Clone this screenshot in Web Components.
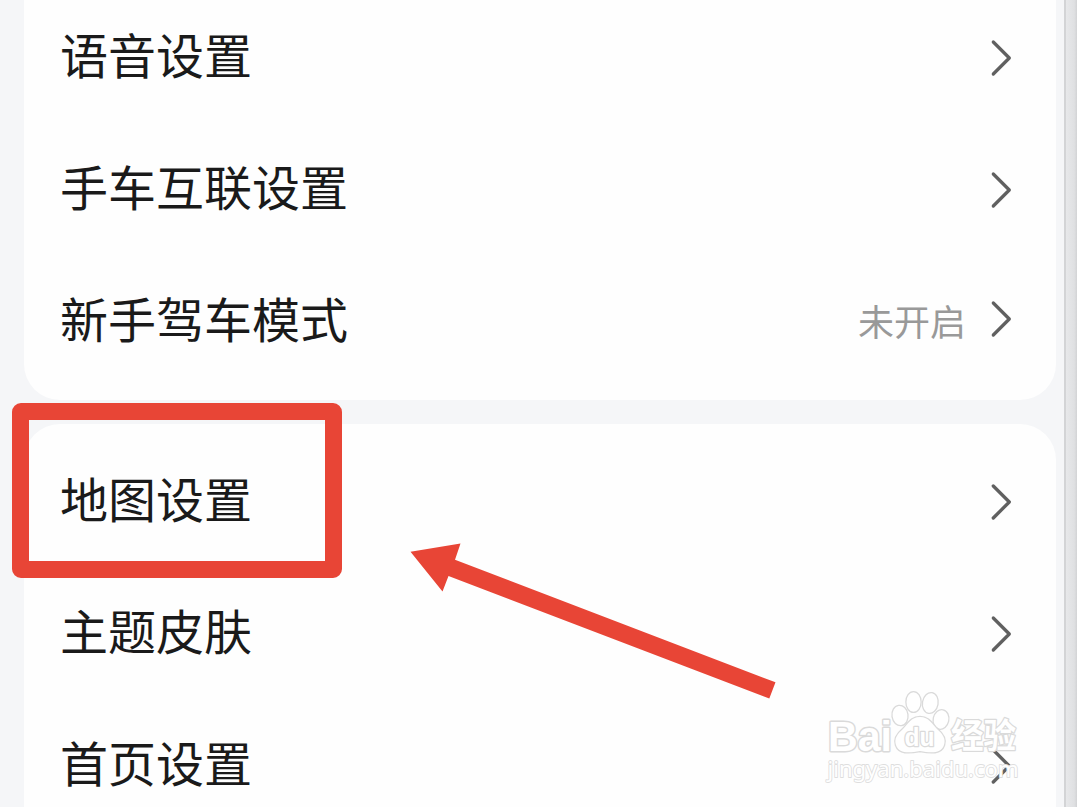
<!DOCTYPE html>
<html lang="zh-CN">
<head>
<meta charset="utf-8">
<title>设置</title>
<style>
  body {
    margin: 0;
    overflow: hidden;
    font-family: "Noto Sans CJK SC", sans-serif;
    color: #1a1a1a;
  }
</style>
</head>
<body>
<settings-screen>
  <settings-card class="first">
    <settings-row>语音设置</settings-row>
    <settings-row>手车互联设置</settings-row>
    <settings-row class="raised">新手驾车模式<span slot="value">未开启</span></settings-row>
  </settings-card>
  <settings-card class="second">
    <settings-row>地图设置</settings-row>
    <settings-row>主题皮肤</settings-row>
    <settings-row>首页设置</settings-row>
  </settings-card>
  <highlight-box slot="overlay"></highlight-box>
  <pointer-arrow slot="overlay"></pointer-arrow>
  <baidu-watermark slot="overlay"></baidu-watermark>
</settings-screen>

<script>
class SettingsScreen extends HTMLElement {
  constructor() {
    super();
    this.attachShadow({ mode: 'open' });
    this.shadowRoot.innerHTML = `
      <style>
        :host {
          display: flex;
          position: relative;
          width: 1077px;
          height: 807px;
          overflow: hidden;
          background: #f5f6f8;
        }
        .list {
          display: flex;
          flex-direction: column;
          flex: 1;
          gap: 24px;
          padding: 0 8px 0 24px;
        }
        .edge {
          box-sizing: border-box;
          width: 13px;
          border-left: 2px solid #d3d4d6;
          background: linear-gradient(90deg, #e7e8ea, #dfe0e2 75%, #d2d3d5);
        }
        ::slotted(.first) {
          height: 400px;
          border-radius: 0 0 36px 36px;
        }
        ::slotted(.second) {
          height: 420px;
          border-radius: 36px 36px 0 0;
        }
      </style>
      <div class="list"><slot></slot></div>
      <div class="edge"></div>
      <slot name="overlay"></slot>
    `;
  }
}

class SettingsCard extends HTMLElement {
  constructor() {
    super();
    this.attachShadow({ mode: 'open' });
    this.shadowRoot.innerHTML = `
      <style>
        :host {
          display: flex;
          flex-direction: column;
          flex-shrink: 0;
          box-sizing: border-box;
          background: #fefefe;
        }
        :host(.first) { justify-content: flex-end; padding-bottom: 12px; }
        :host(.second) { justify-content: flex-start; padding-top: 12px; }
      </style>
      <slot></slot>
    `;
  }
}

class SettingsRow extends HTMLElement {
  constructor() {
    super();
    this.attachShadow({ mode: 'open' });
    this.shadowRoot.innerHTML = `
      <style>
        :host {
          display: flex;
          align-items: center;
          flex-shrink: 0;
          box-sizing: border-box;
          height: 132px;
          padding: 0 44px 0 36px;
        }
        .label {
          flex: 1;
          font-size: 48px;
          line-height: 72px;
          padding-bottom: 11px;
        }
        .value {
          font-size: 36px;
          line-height: 54px;
          color: #999;
          margin-right: 24px;
          padding-bottom: 4px;
        }
        svg { display: block; }
        :host(.raised) svg { margin-bottom: 6px; }
      </style>
      <div class="label"><slot></slot></div>
      <div class="value"><slot name="value"></slot></div>
      <svg width="22" height="38" viewBox="0 0 22 38" fill="none" stroke="#606060" stroke-width="3.3" stroke-linecap="round" stroke-linejoin="round">
        <path d="M3.3 3 L19.3 19 L3.3 35"/>
      </svg>
    `;
  }
}

class HighlightBox extends HTMLElement {
  constructor() {
    super();
    this.attachShadow({ mode: 'open' });
    this.shadowRoot.innerHTML = `
      <style>
        :host {
          display: block;
          position: absolute;
          left: 12px;
          top: 403px;
          box-sizing: border-box;
          width: 330px;
          height: 175px;
          border: 17.5px solid #e84536;
          border-radius: 9px;
        }
      </style>
    `;
  }
}

class PointerArrow extends HTMLElement {
  constructor() {
    super();
    this.attachShadow({ mode: 'open' });
    this.shadowRoot.innerHTML = `
      <style>
        :host {
          display: block;
          position: absolute;
          left: 400px;
          top: 530px;
        }
        svg { display: block; }
      </style>
      <svg width="390" height="180" viewBox="0 0 390 180">
        <path fill="#e84536" d="M10.5 21.7 L60.5 13.5 L55 29.7 L375.5 152.3 L369.3 168.5 L48.5 46 L42.5 61.5 Z"/>
      </svg>
    `;
  }
}

class BaiduWatermark extends HTMLElement {
  constructor() {
    super();
    this.attachShadow({ mode: 'open' });
    this.shadowRoot.innerHTML = `
      <style>
        :host {
          display: block;
          position: absolute;
          left: 810px;
          top: 670px;
        }
        svg { display: block; }
        text, .paw {
          fill: #fff;
          stroke: #dadada;
          paint-order: stroke;
          stroke-linejoin: round;
        }
        .latin { font-family: "Liberation Sans", sans-serif; font-weight: 700; }
        .paw { stroke-width: 2.6; }
        .url { font-family: "Noto Sans", sans-serif; stroke: #dedede; }
      </style>
      <svg width="240" height="137" viewBox="0 0 240 137">
        <text class="latin" x="18" y="81" font-size="42" stroke-width="3" textLength="64" lengthAdjust="spacingAndGlyphs">Bai</text>
        <g class="paw">
          <ellipse cx="90" cy="45.5" rx="7.4" ry="9.6" transform="rotate(-8 90 45.5)"/>
          <ellipse cx="103.5" cy="32" rx="7" ry="9.8"/>
          <ellipse cx="120.3" cy="33" rx="7.2" ry="9.8" transform="rotate(10 120.3 33)"/>
          <ellipse cx="131" cy="49.5" rx="7.2" ry="9.3" transform="rotate(12 131 49.5)"/>
          <path d="M110 47 C101 47 98 54 93 59 C87 64 84 69 86 75 C89 84 99 83 110 81 C121 83 131 84 134 75 C136 69 133 64 127 59 C122 54 119 47 110 47 Z"/>
        </g>
        <text class="latin" x="94.5" y="76" font-size="25" stroke-width="2.6" textLength="30" lengthAdjust="spacingAndGlyphs">du</text>
        <text x="141" y="78" font-size="34" font-weight="700" stroke-width="2.6" textLength="65" lengthAdjust="spacingAndGlyphs">经验</text>
        <text class="url" x="17.5" y="107" font-size="22" stroke-width="1.8" textLength="191" lengthAdjust="spacingAndGlyphs">jingyan.baidu.com</text>
      </svg>
    `;
  }
}

customElements.define('settings-screen', SettingsScreen);
customElements.define('settings-card', SettingsCard);
customElements.define('settings-row', SettingsRow);
customElements.define('highlight-box', HighlightBox);
customElements.define('pointer-arrow', PointerArrow);
customElements.define('baidu-watermark', BaiduWatermark);
</script>
</body>
</html>
